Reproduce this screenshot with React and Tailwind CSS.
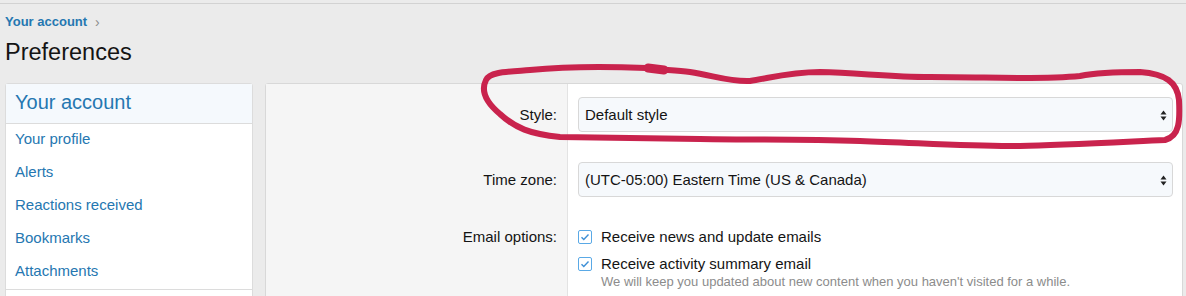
import React from "react"

const links = ["Your profile", "Alerts", "Reactions received", "Bookmarks", "Attachments"]

const SelectArrows = () => (
  <svg width="7" height="11" viewBox="0 0 7 11" className="absolute right-[5px] top-[12px]">
    <path d="M0.5 4.5 L3.5 0.5 L6.5 4.5 Z" fill="#222" />
    <path d="M0.5 6.5 L3.5 10.5 L6.5 6.5 Z" fill="#222" />
  </svg>
)

const Select = ({ value }) => (
  <div className="relative h-[35px] rounded-[4px] border border-[#d8d8d8] bg-[#f6f9fc] pl-[6px] text-[15px] leading-[33px] text-[#141414]">
    {value}
    <SelectArrows />
  </div>
)

const Check = () => (
  <svg width="14" height="14" viewBox="0 0 14 14" className="shrink-0">
    <rect x="0.5" y="0.5" width="13" height="13" rx="1.5" fill="#fff" stroke="#5aa9e6" />
    <path d="M3.5 7.2 L5.8 9.5 L10.5 4.5" fill="none" stroke="#3d8fd6" strokeWidth="1.4" />
  </svg>
)

const Row = ({ label, children, labelLead = "leading-[35px]" }) => (
  <div className="flex">
    <div className={`w-[302px] shrink-0 border-r border-[#e3e3e3] bg-[#f5f5f5] pt-[13px] pb-[17px] pr-[10px] text-right text-[15px] text-[#141414] ${labelLead}`}>
      {label}
    </div>
    <div className="flex-1 pt-[13px] pb-[17px] pl-[10px] pr-[9px]">{children}</div>
  </div>
)

export default function App() {
  return (
    <div className="relative h-[296px] overflow-hidden bg-[#ebebeb] font-['Liberation_Sans',Arial,sans-serif]">
      <div className="h-[3px]" />
      <div className="border-t border-[#d2d2d2] px-[5px]">
        <div className="flex items-center gap-[8px] pt-[10px] text-[13px] leading-[16px]">
          <span className="font-bold text-[#2577b1]">Your account</span>
          <span className="text-[14px] text-[#8c8c8c]">›</span>
        </div>
        <h1 className="mt-[7px] text-[23.5px] leading-[30px] text-[#141414]">Preferences</h1>
        <div className="mt-[16px] flex gap-[12px]">
          <div className="w-[248px] shrink-0 rounded-[3px] border border-[#dcdcdc] bg-white">
            <div className="h-[40px] border-b border-[#dcdcdc] bg-[#f5f9fd] pl-[9px] text-[20px] leading-[36px] text-[#2577b1]">
              Your account
            </div>
            <div className="border-b border-[#dcdcdc]">
              {links.map((l) => (
                <div key={l} className="pl-[9px] pt-[6px] pb-[9px] text-[15px] leading-[18px] text-[#2577b1]">
                  {l}
                </div>
              ))}
            </div>
            <div className="h-[20px]" />
          </div>
          <div className="w-[918px] shrink-0 rounded-[3px] border border-[#d8d8d8] bg-white">
            <Row label="Style:">
              <Select value="Default style" />
            </Row>
            <Row label="Time zone:">
              <Select value="(UTC-05:00) Eastern Time (US & Canada)" />
            </Row>
            <Row label="Email options:" labelLead="leading-[20px]">
              <div className="flex items-center gap-[9px] text-[15px] leading-[20px] text-[#141414]">
                <Check />
                <span>Receive news and update emails</span>
              </div>
              <div className="mt-[7px] flex items-center gap-[9px] text-[15px] leading-[20px] text-[#141414]">
                <Check />
                <span>Receive activity summary email</span>
              </div>
              <div className="pl-[23px] text-[13px] leading-[16px] text-[#8c8c8c]">
                We will keep you updated about new content when you haven't visited for a while.
              </div>
            </Row>
          </div>
        </div>
      </div>
      <svg width="1186" height="296" className="pointer-events-none absolute left-0 top-0">
        <path
          d="M646 68 C600 66 560 67 530 70 C505 72 490 72 486 80 C480 92 488 104 500 114 C515 128 530 134 560 137 C620 138 660 138 700 139 C760 140 800 139 860 141 C920 143 980 147 1020 146 C1060 145 1120 142 1165 140 C1180 136 1180 120 1179 100 C1177 82 1166 74 1140 72 C1110 72 1095 73 1080 76 C1040 80 990 77 930 77 C890 77 860 73 820 72 C790 72 770 78 750 81 C730 82 715 76 690 72 C675 70 660 70 646 68 Z"
          fill="none"
          stroke="#c9234d"
          strokeWidth="6"
          strokeLinecap="round"
          strokeLinejoin="round"
        />
        <path d="M648 68 L664 70" stroke="#c9234d" strokeWidth="9" strokeLinecap="round" />
      </svg>
    </div>
  )
}
